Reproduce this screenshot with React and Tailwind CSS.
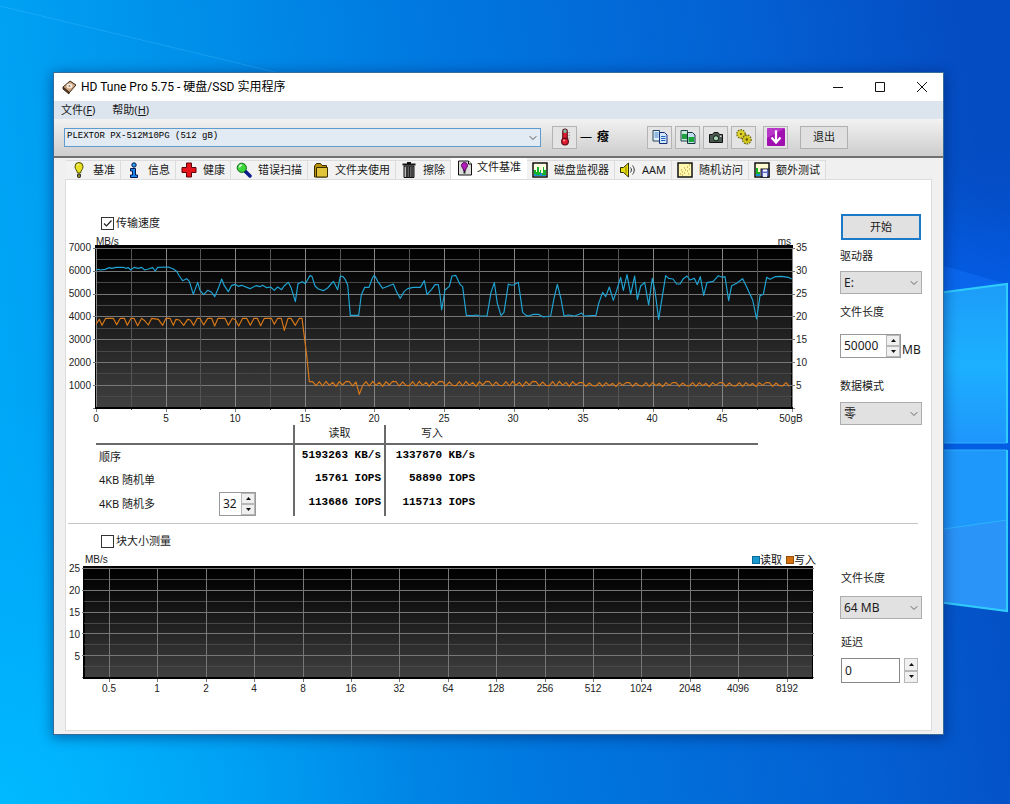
/**
 * HD Tune Pro - file benchmark window
 *
 * Desktop wallpaper, the application window and the two benchmark charts
 */

import React from 'react';
import { ChevronDown } from 'lucide-react';

/* ---------- Wallpaper ---------- */

const Wallpaper = () => (
  <svg className="absolute inset-0 w-full h-full" viewBox="0 0 1010 804" preserveAspectRatio="none" aria-hidden="true">
    <defs>
      <linearGradient id="sky" x1="0" y1="0.56" x2="1" y2="0.44">
        <stop offset="0" stopColor="#00a8f8" />
        <stop offset="0.2" stopColor="#0094ec" />
        <stop offset="0.5" stopColor="#0076de" />
        <stop offset="0.8" stopColor="#0460d2" />
        <stop offset="1" stopColor="#044cc2" />
      </linearGradient>
      <radialGradient id="corner" cx="0" cy="804" r="420" gradientUnits="userSpaceOnUse">
        <stop offset="0" stopColor="#00bcff" stopOpacity="0.9" />
        <stop offset="1" stopColor="#00a8ff" stopOpacity="0" />
      </radialGradient>
      <radialGradient id="glow" cx="985" cy="370" r="220" gradientUnits="userSpaceOnUse">
        <stop offset="0" stopColor="#0070ff" stopOpacity="0.85" />
        <stop offset="0.6" stopColor="#0560f0" stopOpacity="0.45" />
        <stop offset="1" stopColor="#0450d0" stopOpacity="0" />
      </radialGradient>
      <linearGradient id="paneTop" x1="0" y1="0" x2="0" y2="1">
        <stop offset="0" stopColor="#1c9cf8" />
        <stop offset="0.5" stopColor="#1cb0ff" />
        <stop offset="1" stopColor="#1f96fc" />
      </linearGradient>
    </defs>
    <rect width="1010" height="804" fill="url(#sky)" />
    <rect width="1010" height="804" fill="url(#corner)" />
    <rect width="1010" height="804" fill="url(#glow)" />
    <path d="M0 6L300 78" stroke="#4cc4ff" strokeOpacity="0.3" />
    <polygon points="930,262 1007,284 930,294" fill="#1478ff" opacity="0.4" />
    <polygon points="930,294 1007,284 1007,443 930,443" fill="url(#paneTop)" />
    <polygon points="930,450 1007,450 1007,611 930,600" fill="#1f98fb" />
    <polygon points="930,530 1007,520 1007,611 930,600" fill="#2a94f8" />
    <path d="M930 531L1007 520" stroke="#2cb4fc" />
    <path d="M930 443H1007M930 450H1007" stroke="#30b0fc" />
    <path d="M930 294L1007 284V443M1007 450V611L930 601" fill="none" stroke="#30ccfc" strokeWidth="2" />
  </svg>
);

/* ---------- Icons ---------- */

const Icon = ({ size = 16, children }) => (
  <svg width={size} height={size} viewBox="0 0 16 16" className="shrink-0" aria-hidden="true">
    {children}
  </svg>
);

const DiskIcon = () => (
  <Icon>
    <path d="M2 8L9 2l6 4-7 8z" fill="#c9a27c" stroke="#3d2a1c" />
    <path d="M2 8l6 5v2L2 10z" fill="#5a3d28" stroke="#3d2a1c" />
    <ellipse cx="8.5" cy="7" rx="3" ry="2.4" fill="#f4e6d8" />
    <circle cx="8.5" cy="7" r="0.8" fill="#6d4b34" />
  </Icon>
);

const BulbIcon = () => (
  <Icon>
    <path d="M8 .5a4 4 0 0 0-4 4c0 3 2 3.500 2.500 6.500h3C10 8 12 7.500 12 4.500a4 4 0 0 0-4-4z" fill="#e8e020" stroke="#4a4a00" />
    <path d="M6 3.500c.5-1 1.500-1.200 2-1" stroke="#fff" fill="none" />
    <rect x="6.500" y="12" width="3" height="3.500" rx="1" fill="#8a8420" stroke="#222" />
  </Icon>
);

const InfoIcon = () => (
  <Icon>
    <circle cx="8" cy="3" r="2.200" fill="#2aa0f4" stroke="#04164a" />
    <path d="M4.500 6.500h5v6.500h2v2.500h-7V13h2V9h-2z" fill="#1c86ea" stroke="#04164a" />
  </Icon>
);

const HealthIcon = () => (
  <Icon>
    <path d="M5.500 1h5v4.500H15v5h-4.500V15h-5v-4.500H1v-5h4.500z" fill="#e8141c" stroke="#5c0508" />
  </Icon>
);

const ScanIcon = () => (
  <Icon>
    <path d="M9 9l5 5" stroke="#0a1c8c" strokeWidth="3.500" strokeLinecap="round" />
    <circle cx="5.800" cy="5.800" r="4.600" fill="#3cd83c" stroke="#0c6a14" />
    <path d="M3.500 5.500c0-1.500 1-2.500 2.500-2.500" stroke="#d8ffd8" strokeWidth="1.500" fill="none" />
  </Icon>
);

const FolderIcon = () => (
  <Icon>
    <path d="M1.500 4l2-2.500h4L9 3.500h4.500V15H1.500z" fill="#b89200" stroke="#3a2e00" />
    <path d="M3.500 5.500h11V15h-11z" fill="#e2c43a" stroke="#3a2e00" />
  </Icon>
);

const TrashIcon = () => (
  <Icon>
    <path d="M1.500 2.500h13M6 1h4" stroke="#111" strokeWidth="2" />
    <path d="M3 4h10v11.500H3z" fill="#777" stroke="#111" />
    <path d="M6 4.500v11M8.500 4.500v11" stroke="#222" strokeWidth="1.500" />
    <path d="M11 4.500v11" stroke="#111" />
    <path d="M4.300 5v10" stroke="#ccc" />
  </Icon>
);

const FileBenchIcon = () => (
  <Icon>
    <path d="M1.500 1h10l3 3v11h-13z" fill="#dcdcdc" stroke="#111" />
    <path d="M11.500 1v3h3" fill="#fff" stroke="#111" />
    <path d="M7.500 2.500c-2 0-3 1.500-3 3 0 2 2 2.500 2 5h2c0-2.500 2-3 2-5 0-1.500-1-3-3-3z" fill="#b01cb8" stroke="#4a0450" />
    <rect x="6.500" y="11" width="2" height="2.500" fill="#222" />
  </Icon>
);

const MonitorIcon = () => (
  <Icon>
    <rect x="1" y="1" width="14" height="14" fill="#fffde0" stroke="#111" strokeWidth="1.500" />
    <path d="M2 14V8h2v2h1V5h2v5h1V8h1v3h2V5h1v3h2v6z" fill="#14b428" />
    <path d="M2 14v-2h2v1h4v-2h2v2h4v1z" fill="#1a90d0" />
  </Icon>
);

const SpeakerIcon = () => (
  <Icon>
    <path d="M.5 5.500h3L8.500 1v14l-5-4.500h-3z" fill="#e6dc10" stroke="#333000" />
    <path d="M6 4.500v7" stroke="#8c8400" />
    <path d="M10.500 5.500c1.200 1.500 1.200 3.500 0 5M12.500 3.500c2.300 2.500 2.300 6.500 0 9" fill="none" stroke="#333" />
  </Icon>
);

const RandomIcon = () => (
  <Icon>
    <rect x="1" y="1" width="14" height="14" fill="#fff6b0" stroke="#111" strokeWidth="1.500" />
    <path d="M3 12h1M5 10h1M4 8h1M7 11h1M8 8h1M7 6h1M10 9h1M10 5h1M12 7h1M12 3h1M11 12h1M5 13h1" stroke="#b08a10" strokeWidth="1.200" />
  </Icon>
);

const ExtraIcon = () => (
  <Icon>
    <rect x="1" y="1" width="14" height="14" fill="#fffbd0" stroke="#111" strokeWidth="1.500" />
    <path d="M2 14V6h2v4h2v4z" fill="#14b428" />
    <path d="M2 14v-2h4v2z" fill="#1a90d0" />
    <rect x="7" y="7" width="8" height="8" fill="#5c68c8" stroke="#111" />
    <rect x="9" y="11" width="4" height="4" fill="#e8ecff" />
    <rect x="9" y="7.500" width="4" height="2" fill="#fff" />
  </Icon>
);

const ThermometerIcon = () => (
  <Icon size={18}>
    <rect x="6" y="1" width="4" height="10" rx="2" fill="#e01c30" stroke="#5c0a14" />
    <rect x="6.500" y="1" width="3" height="3.500" rx="1.500" fill="#7ab8a4" />
    <circle cx="8" cy="12" r="3" fill="#e01c30" stroke="#5c0a14" />
    <path d="M11 4h1.500M11 6.500h1.500M11 9h1.500" stroke="#999" strokeWidth="0.800" />
    <circle cx="7.200" cy="11.200" r="0.900" fill="#ff9aa4" />
  </Icon>
);

const CopyTextIcon = () => (
  <Icon>
    <path d="M1 1.500h6.500V12H1z" fill="#e4f0fc" stroke="#22485c" />
    <path d="M2.500 4h4M2.500 6h4M2.500 8h4" stroke="#3c82c8" />
    <path d="M7.500 3.500h5l2.500 2.500v8.500H7.500z" fill="#d4e8fc" stroke="#142c7c" />
    <path d="M9 7.500h4.500M9 9.500h4.500M9 11.500h4.500" stroke="#2464c0" />
  </Icon>
);

const CopyImageIcon = () => (
  <Icon>
    <path d="M1 1.500h6.500V12H1z" fill="#c8e8dc" stroke="#1c4444" />
    <path d="M2 5h5v5H2z" fill="#1ca040" />
    <path d="M7.500 3.500h5l2.500 2.500v8.500H7.500z" fill="#c4dcf0" stroke="#14343c" />
    <path d="M8.500 8h5.500v5H8.500z" fill="#18a838" />
  </Icon>
);

const CameraIcon = () => (
  <Icon>
    <path d="M1.500 5.500h3l1.500-2h4l1.500 2h3v8h-13z" fill="#4a5a50" stroke="#111" />
    <circle cx="8" cy="9.300" r="2.600" fill="#a8d8b8" stroke="#111" />
    <rect x="12" y="6.500" width="1.500" height="1.500" fill="#ddd" />
  </Icon>
);

const GearsIcon = () => (
  <Icon>
    <circle cx="5" cy="5" r="3.800" fill="none" stroke="#6e6600" strokeWidth="2" strokeDasharray="1.600 0.800" />
    <circle cx="5" cy="5" r="3.600" fill="#e0d428" />
    <circle cx="5" cy="5" r="1.100" fill="#5e5600" />
    <circle cx="10.800" cy="10.500" r="4" fill="none" stroke="#6e6600" strokeWidth="2" strokeDasharray="1.600 0.800" />
    <circle cx="10.800" cy="10.500" r="3.800" fill="#d0c41c" />
    <circle cx="10.800" cy="10.500" r="1.200" fill="#5e5600" />
  </Icon>
);

const DownloadIcon = () => (
  <Icon size={18}>
    <rect width="16" height="16" rx="1" fill="#a010b0" />
    <path d="M0 0h16L0 9z" fill="#c850d8" opacity="0.6" />
    <path d="M8 2V12M4 8.500l4 4.500 4-4.500" fill="none" stroke="#fff" strokeWidth="2" />
  </Icon>
);

/* ---------- Form controls ---------- */

const DropDown = ({ id, value }) => (
  <div className="relative w-full">
    <select
      id={id}
      defaultValue={value}
      className="block h-[23px] w-full appearance-none border border-[#adadad] bg-[#e1e1e1] pl-[3px] text-[12px] text-[#1a1a1a]"
    >
      <option>{value}</option>
    </select>
    <ChevronDown size={12} strokeWidth={2} className="pointer-events-none absolute right-0.5 top-1.5 text-[#666]" />
  </div>
);

const Arrow = ({ up }) => (
  <svg width="5" height="3" viewBox="0 0 5 3" aria-hidden="true">
    <path d={up ? 'M0 3L2.500 0L5 3z' : 'M0 0L2.500 3L5 0z'} fill="#111" />
  </svg>
);

const SpinButtons = ({ label }) => (
  <div className="flex w-3.5 shrink-0 flex-col">
    <button aria-label={`${label} +`} className="flex flex-1 items-center justify-center border border-[#b8b8b8] bg-[#f0f0f0]">
      <Arrow up />
    </button>
    <button aria-label={`${label} -`} className="flex flex-1 items-center justify-center border border-[#b8b8b8] bg-[#f0f0f0]">
      <Arrow />
    </button>
  </div>
);

const CheckBox = ({ label, checked }) => (
  <label className="ml-[35px] flex h-3.5 items-center gap-0.5 text-[11px]">
    <span className="relative flex">
      <input type="checkbox" defaultChecked={checked} className="peer size-[13px] appearance-none border border-[#333] bg-white" />
      <svg viewBox="0 0 13 13" className="pointer-events-none absolute inset-0 hidden peer-checked:block" aria-hidden="true">
        <path d="M3 6.500l2.500 2.500L10.500 3.500" fill="none" stroke="#222" strokeWidth="1.200" />
      </svg>
    </span>
    {label}
  </label>
);

/* ---------- Transfer rate chart ---------- */

// samples are plotted at three units per pixel
const READ_LINE =
  '108,196 115,193 122,195 135,193 148,188 155,190 168,187 190,187 197,190 205,188 212,195 222,187 235,190 245,187 254,195 265,192 278,188 286,198 293,187 325,186 340,192 350,199 358,213 368,227 380,221 388,229 400,268 413,232 420,256 431,269 443,256 455,262 464,275 475,250 485,222 493,242 505,260 514,242 525,238 535,244 545,241 570,251 588,242 600,245 608,241 620,248 632,246 643,256 653,246 665,254 672,243 685,232 694,250 706,290 714,236 727,230 736,236 744,222 750,212 756,214 765,243 775,252 790,257 803,249 820,229 833,254 841,213 849,215 856,224 863,240 871,331 896,331 904,270 914,247 927,247 936,222 941,212 945,214 953,229 968,250 980,245 1000,237 1011,263 1021,280 1032,260 1043,251 1060,247 1081,247 1093,227 1101,269 1115,253 1125,239 1135,239 1140,270 1145,315 1155,255 1168,244 1176,213 1187,211 1200,238 1208,245 1219,331 1240,332 1250,330 1258,333 1281,333 1293,262 1303,233 1312,295 1323,331 1332,322 1345,237 1352,240 1362,240 1367,236 1375,232 1388,322 1398,331 1405,333 1420,328 1435,328 1450,336 1472,333 1482,280 1492,238 1503,282 1512,333 1525,330 1545,333 1557,328 1565,324 1572,333 1608,331 1616,295 1628,262 1637,275 1648,246 1660,286 1670,256 1682,217 1690,256 1701,209 1712,268 1724,213 1732,284 1742,243 1754,232 1766,300 1777,220 1785,258 1796,343 1806,280 1817,212 1826,220 1839,222 1850,237 1860,237 1870,221 1881,213 1890,225 1903,220 1912,239 1921,215 1931,271 1941,233 1960,229 1975,212 1987,217 1995,215 2006,287 2015,242 2030,235 2048,221 2060,246 2078,285 2090,342 2100,272 2110,268 2120,217 2130,223 2145,215 2165,214 2185,217 2195,222';

const WRITE_LINE_CACHED =
  '108,358 118,343 126,361 137,340 160,340 170,359 181,340 193,340 202,361 213,340 222,340 233,362 245,340 255,348 265,360 275,340 295,343 308,361 318,340 330,340 340,361 348,343 358,345 371,361 383,343 391,345 401,361 412,340 420,340 431,360 443,340 455,340 464,363 474,340 495,340 505,361 517,340 526,344 536,363 548,340 560,340 571,361 582,340 592,340 602,362 613,340 634,340 643,358 653,340 664,340 673,376 684,340 693,340 706,361 718,340 726,340 733,395 740,450 748,530 758,530';

// after the cache is full the write speed only ripples around 1000 MB/s
const RIPPLE = [542, 530, 543, 529, 541, 532, 544, 530, 540, 529, 530, 543, 531, 541];
const writeTail = [];
for (let i = 0, x = 768; x < 2195; i++, x += 10) {
  const y = RIPPLE[i % RIPPLE.length];
  writeTail.push(`${x},${x === 898 ? 568 : x > 1550 ? Math.round(539 + (y - 537) * 0.8) : y}`);
}
const WRITE_LINE = `${WRITE_LINE_CACHED} ${writeTail.join(' ')}`;

const TransferChart = () => {
  const gx = (i) => Math.round(30 + i * 34.8) + 0.5;
  const gy = (i) => Math.round(18 + i * 11.4) + 0.5;
  const steps = (n) => Array.from({ length: n }, (_, i) => i);

  return (
    <svg viewBox="0 0 752 195" className="block w-full text-[10px]" role="img" aria-label="传输速度">
      <defs>
        <linearGradient id="plot" x1="0" y1="0" x2="0" y2="1">
          <stop offset="0" stopColor="#000" />
          <stop offset="0.15" stopColor="#060606" />
          <stop offset="1" stopColor="#404040" />
        </linearGradient>
      </defs>
      <rect x="29" y="15" width="698" height="164" fill="#000" />
      <rect x="31" y="17" width="694" height="160" fill="url(#plot)" />
      {steps(15).map((i) => (
        <path key={i} d={`M${i % 2 ? 30 : 27} ${gy(i)}H${i % 2 ? 726 : 729}`} stroke={i % 2 ? '#484848' : '#777'} />
      ))}
      {steps(21).map((i) => (
        <path key={i} d={`M${gx(i)} 18V${i % 2 ? 180 : 182}`} stroke={i % 2 ? '#555' : '#858585'} />
      ))}
      <path d="M29 178H727" stroke="#000" strokeWidth="2" />
      <g transform="translate(-6 -25) scale(0.33333)" fill="none" strokeWidth="3.500" strokeLinejoin="round">
        <polyline points={READ_LINE} stroke="#1fa4d4" />
        <polyline points={WRITE_LINE} stroke="#d87818" />
      </g>
      <g fill="#222">
        <text x="30" y="15">MB/s</text>
        <text x="725" y="15" textAnchor="end">ms</text>
        {steps(7).map((i) => (
          <text key={i} x="25" y={21 + i * 23} textAnchor="end">{7000 - i * 1000}</text>
        ))}
        {steps(7).map((i) => (
          <text key={i} x="730" y={21 + i * 23}>{35 - i * 5}</text>
        ))}
        {steps(11).map((i) => (
          <text key={i} x={Math.round(30 + i * 69.5)} y="192" textAnchor="middle">
            {i === 10 ? '50gB' : i * 5}
          </text>
        ))}
      </g>
    </svg>
  );
};

/* ---------- Block size chart ---------- */

const BLOCK_SIZES = ['0.5', '1', '2', '4', '8', '16', '32', '64', '128', '256', '512', '1024', '2048', '4096', '8192'];

const BlockChart = () => {
  const gx = (i) => Math.round(43 + i * 48.4);
  const gy = (i) => Math.round(16 + i * 10.9) + 0.5;

  return (
    <svg viewBox="0 0 752 144" className="block w-full text-[10px]" role="img" aria-label="块大小测量">
      <rect x="17" y="14" width="730" height="113" fill="#000" />
      <rect x="19" y="16" width="727" height="109" fill="url(#plot)" />
      {Array.from({ length: 11 }, (_, i) => (
        <path key={i} d={`M${i % 2 ? 18 : 16} ${gy(i)}H${i % 2 ? 746 : 748}`} stroke={i % 2 ? '#484848' : '#777'} />
      ))}
      {BLOCK_SIZES.map((size, i) => (
        <path key={size} d={`M${gx(i) + 0.5} 16V130`} stroke="#777" />
      ))}
      <path d="M17 126H747" stroke="#000" strokeWidth="2" />
      <g fill="#222">
        <text x="19" y="11">MB/s</text>
        {[25, 20, 15, 10, 5].map((v, i) => (
          <text key={v} x="14" y={20 + i * 22} textAnchor="end">{v}</text>
        ))}
        {BLOCK_SIZES.map((size, i) => (
          <text key={size} x={gx(i)} y="140" textAnchor="middle">{size}</text>
        ))}
      </g>
      <rect x="686.500" y="4.500" width="7" height="7" fill="#1898d0" stroke="#0a6c94" />
      <rect x="720.500" y="4.500" width="7" height="7" fill="#d4700c" stroke="#94500a" />
      <g fill="#111" className="text-[11px]">
        <text x="694" y="12">读取</text>
        <text x="728" y="12">写入</text>
      </g>
    </svg>
  );
};

/* ---------- Results table ---------- */

const RESULTS = [
  { name: '顺序', read: '5193263 KB/s', write: '1337870 KB/s' },
  { name: '4KB 随机单', read: '15761 IOPS', write: '58890 IOPS' },
  { name: '4KB 随机多', read: '113686 IOPS', write: '115713 IOPS', queue: '32' },
];

const ResultsTable = () => (
  <div className="pl-[30px] pr-[60px]">
    <table className="w-full table-fixed border-collapse text-[11px] leading-4">
      <colgroup>
        <col className="w-[198px]" />
        <col className="w-[91px]" />
        <col className="w-[93px]" />
        <col />
      </colgroup>
      <thead>
        <tr className="h-[19px] border-b-2 border-[#6a6a6a]">
          <td />
          <th className="border-x-2 border-[#6a6a6a] pb-0.5 font-normal">读取</th>
          <th className="pb-0.5 font-normal">写入</th>
          <td />
        </tr>
      </thead>
      <tbody>
        {RESULTS.map((row) => (
          <tr key={row.name} className="h-6">
            <th className="pl-[3px] text-left font-normal">
              <div className="flex items-center justify-between pr-[37px]">
                {row.name}
                {row.queue && (
                  <div className="flex h-6 w-[37px] border border-[#999] bg-white">
                    <input aria-label={row.name} defaultValue={row.queue} className="w-0 min-w-0 flex-1 pl-[3px] text-[12px]" />
                    <SpinButtons label={row.name} />
                  </div>
                )}
              </div>
            </th>
            <td className="border-x-2 border-[#6a6a6a] pb-1 pr-[3px] text-right font-['Liberation_Mono',monospace] font-bold text-black">{row.read}</td>
            <td className="pb-1 pr-[3px] text-right font-['Liberation_Mono',monospace] font-bold text-black">{row.write}</td>
            <td />
          </tr>
        ))}
      </tbody>
    </table>
  </div>
);

/* ---------- Window chrome ---------- */

const TitleBar = () => (
  <header className="flex h-7 items-center bg-white pl-[7px]">
    <DiskIcon />
    <h1 className="ml-1 flex-1 font-['Roboto','Noto_Sans_CJK_SC',sans-serif] text-[12px] text-black">HD Tune Pro 5.75 - 硬盘/SSD 实用程序</h1>
    <button aria-label="最小化" className="flex h-7 w-[42px] items-center justify-center">
      <svg width="10" height="10" stroke="#111"><path d="M0 5.500h10" /></svg>
    </button>
    <button aria-label="最大化" className="flex h-7 w-[42px] items-center justify-center">
      <svg width="10" height="10" stroke="#111" fill="none"><path d="M.5.5h9v9h-9z" /></svg>
    </button>
    <button aria-label="关闭" className="flex h-7 w-[42px] items-center justify-center">
      <svg width="10" height="10" stroke="#111"><path d="M0 0l10 10M10 0L0 10" /></svg>
    </button>
  </header>
);

const MenuBar = () => (
  <nav className="flex h-[18px] items-center gap-[17px] bg-[#dce4ee] pl-[7px] text-[11px]">
    <button>文件(<u>F</u>)</button>
    <button>帮助(<u>H</u>)</button>
  </nav>
);

const ToolButton = ({ label, children }) => (
  <button aria-label={label} className="flex h-[23px] w-[25px] items-center justify-center border border-[#b4b4b4] bg-[#e4e4e4]">
    {children}
  </button>
);

const ToolBar = () => (
  <div className="flex h-[39px] items-center border-b-2 border-[#707070] bg-linear-to-b from-[#f2f2f2] to-[#cdcdcd] pb-px pl-2.5 pr-[95px]">
    <div className="relative min-w-0 flex-1">
      <select
        aria-label="硬盘"
        className="block h-[19px] w-full appearance-none border border-[#5f9bcc] bg-[#e2eaf3] pl-0.5 font-['Liberation_Mono',monospace] text-[9px] text-black"
      >
        <option>PLEXTOR PX-512M10PG (512 gB)</option>
      </select>
      <ChevronDown size={12} className="pointer-events-none absolute right-0.5 top-1 text-[#555]" />
    </div>
    <div className="ml-[11px] flex items-center">
      <ToolButton label="温度"><ThermometerIcon /></ToolButton>
      <span className="ml-[3px] flex w-[67px] items-center gap-[5px] text-[12px] font-bold text-black">
        <span className="font-normal">—</span>癈
      </span>
    </div>
    <div className="flex items-center gap-[3px]">
      <ToolButton label="复制文本"><CopyTextIcon /></ToolButton>
      <ToolButton label="复制图像"><CopyImageIcon /></ToolButton>
      <ToolButton label="截图"><CameraIcon /></ToolButton>
      <ToolButton label="选项"><GearsIcon /></ToolButton>
    </div>
    <div className="ml-[7px] flex items-center gap-3">
      <ToolButton label="保存"><DownloadIcon /></ToolButton>
      <button className="h-[23px] w-12 border border-[#b0b0b0] bg-[#e0e0e0] text-[11px]">退出</button>
    </div>
  </div>
);

const TABS = [
  { label: '基准', icon: BulbIcon },
  { label: '信息', icon: InfoIcon },
  { label: '健康', icon: HealthIcon },
  { label: '错误扫描', icon: ScanIcon },
  { label: '文件夹使用', icon: FolderIcon },
  { label: '擦除', icon: TrashIcon },
  { label: '文件基准', icon: FileBenchIcon, active: true },
  { label: '磁盘监视器', icon: MonitorIcon },
  { label: 'AAM', icon: SpeakerIcon },
  { label: '随机访问', icon: RandomIcon },
  { label: '额外测试', icon: ExtraIcon },
];

const TabStrip = () => (
  <div role="tablist" className="flex h-[21px] items-end pl-px">
    {TABS.map(({ label, icon: TabIcon, active }) => (
      <button
        key={label}
        role="tab"
        aria-selected={!!active}
        className={
          active
            ? 'flex h-[21px] items-center gap-1 whitespace-nowrap bg-white pb-0.5 pl-1.5 pr-1.5 text-[11px]'
            : 'flex h-[19px] items-center gap-1.5 whitespace-nowrap border-r border-t border-[#dcdcdc] bg-[#f2f2f2] pl-[5px] pr-[5px] text-[11px]'
        }
      >
        <TabIcon />
        {label}
      </button>
    ))}
  </div>
);

/* ---------- Main window ---------- */

const App = () => {
  return (
    <div className="relative min-h-screen pb-[70px] pl-[54px] pr-[67px] pt-[73px] font-['Noto_Sans','Noto_Sans_CJK_SC',sans-serif] text-[#1a1a1a]">
      <Wallpaper />
      <main className="relative bg-[#f0f0f0] shadow-[0_2px_12px_2px_rgba(0,20,80,0.45)] outline outline-[#3a6a98]">
        <TitleBar />
        <MenuBar />
        <ToolBar />
        <div className="pb-[3px] pl-[11px] pr-[11px]">
          <TabStrip />
          <section className="border border-[#dcdcdc] bg-white pb-[34px]">
            <div className="flex gap-[22px] pr-[9px]">
              <div className="min-w-0 flex-1 pt-9">
                <CheckBox label="传输速度" checked />
                <div className="font-['Liberation_Sans','Noto_Sans_CJK_SC',sans-serif]">
                  <TransferChart />
                </div>
                <ResultsTable />
              </div>
              <div className="flex w-[82px] shrink-0 flex-col pt-[34px] text-[11px] leading-5">
                <button className="mx-px h-[26px] border-2 border-[#1a7ac8] bg-[#e1e1e1]">开始</button>
                <label htmlFor="drive" className="mt-1.5">驱动器</label>
                <div className="mt-[5px]"><DropDown id="drive" value="E:" /></div>
                <label htmlFor="length" className="mt-2">文件长度</label>
                <div className="mt-3 flex items-end gap-px">
                  <div className="flex h-6 w-[61px] border border-[#999] bg-white">
                    <input id="length" defaultValue="50000" className="w-0 min-w-0 flex-1 pl-[3px] text-[12px]" />
                    <SpinButtons label="文件长度" />
                  </div>
                  <span className="text-[12px] leading-4">MB</span>
                </div>
                <label htmlFor="mode" className="mt-[18px]">数据模式</label>
                <div className="mt-1.5"><DropDown id="mode" value="零" /></div>
              </div>
            </div>

            <hr className="ml-0.5 mr-[13px] mt-[7px] border-[#c4c4c4]" />

            <div className="flex gap-[22px] pr-[9px]">
              <div className="min-w-0 flex-1 pt-2.5">
                <CheckBox label="块大小测量" />
                <div className="mt-1 font-['Liberation_Sans','Noto_Sans_CJK_SC',sans-serif]">
                  <BlockChart />
                </div>
              </div>
              <div className="flex w-[82px] shrink-0 flex-col pt-11 text-[11px] leading-5">
                <label htmlFor="block-length" className="pl-px">文件长度</label>
                <div className="mt-2"><DropDown id="block-length" value="64 MB" /></div>
                <label htmlFor="delay" className="mt-[13px] pl-px">延迟</label>
                <div className="mt-1.5 flex h-[25px] gap-1 pl-px">
                  <input id="delay" defaultValue="0" className="w-[59px] border border-[#888] bg-white pl-[3px] text-[12px]" />
                  <SpinButtons label="延迟" />
                </div>
              </div>
            </div>
          </section>
        </div>
      </main>
    </div>
  );
};

export default App;
